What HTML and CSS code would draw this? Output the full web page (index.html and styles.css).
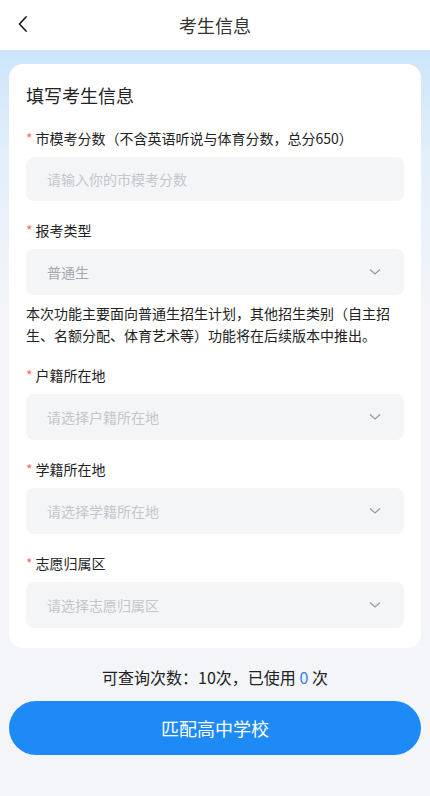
FILE: index.html
```html
<!DOCTYPE html>
<html lang="zh">
<head>
<meta charset="utf-8">
<meta name="viewport" content="width=device-width, initial-scale=1">
<link rel="stylesheet" href="styles.css">
</head>
<body>
<div class="page">
  <header class="nav">
    <span class="back">
      <svg width="12" height="18" viewBox="0 0 12 18"><path d="M9 2 L2.5 9 L9 16" fill="none" stroke="#222" stroke-width="1.8" stroke-linecap="round" stroke-linejoin="round"/></svg>
    </span>
    <h1 class="nav-title">考生信息</h1>
  </header>
  <main class="content">
    <section class="card">
      <h2 class="card-title">填写考生信息</h2>
      <div class="field">
        <div class="label"><span class="req">*</span>市模考分数（不含英语听说与体育分数，总分650）</div>
        <div class="control input"><span class="ph">请输入你的市模考分数</span></div>
      </div>
      <div class="field">
        <div class="label"><span class="req">*</span>报考类型</div>
        <div class="control select"><span class="val">普通生</span><svg class="arrow" width="12" height="8" viewBox="0 0 12 8"><path d="M1 1.5 L6 6 L11 1.5" fill="none" stroke="#999" stroke-width="1.2"/></svg></div>
      </div>
      <p class="note">本次功能主要面向普通生招生计划，其他招生类别（自主招生、名额分配、体育艺术等）功能将在后续版本中推出。</p>
      <div class="field">
        <div class="label"><span class="req">*</span>户籍所在地</div>
        <div class="control select"><span class="ph">请选择户籍所在地</span><svg class="arrow" width="12" height="8" viewBox="0 0 12 8"><path d="M1 1.5 L6 6 L11 1.5" fill="none" stroke="#999" stroke-width="1.2"/></svg></div>
      </div>
      <div class="field">
        <div class="label"><span class="req">*</span>学籍所在地</div>
        <div class="control select"><span class="ph">请选择学籍所在地</span><svg class="arrow" width="12" height="8" viewBox="0 0 12 8"><path d="M1 1.5 L6 6 L11 1.5" fill="none" stroke="#999" stroke-width="1.2"/></svg></div>
      </div>
      <div class="field last">
        <div class="label"><span class="req">*</span>志愿归属区</div>
        <div class="control select"><span class="ph">请选择志愿归属区</span><svg class="arrow" width="12" height="8" viewBox="0 0 12 8"><path d="M1 1.5 L6 6 L11 1.5" fill="none" stroke="#999" stroke-width="1.2"/></svg></div>
      </div>
    </section>
    <p class="quota">可查询次数：10次，已使用 <span class="used">0</span> 次</p>
    <button class="submit">匹配高中学校</button>
  </main>
</div>
</body>
</html>
```
FILE: styles.css
```css
* { box-sizing: border-box; }
html, body {
  margin: 0;
  padding: 0;
  height: 100%;
}
body {
  font-family: "Noto Sans CJK SC", "Noto Sans", sans-serif;
  color: #222;
  background: #f3f5f9;
}
.page {
  min-height: 796px;
  display: flex;
  flex-direction: column;
}
.nav {
  height: 50px;
  background: #fff;
  display: flex;
  align-items: center;
  justify-content: center;
  position: relative;
}
.back {
  position: absolute;
  left: 17px;
  top: 15px;
  display: flex;
}
.nav-title {
  margin: 0;
  font-size: 18px;
  font-weight: 400;
  color: #333;
}
.content {
  flex: 1;
  background: linear-gradient(180deg, #cce5fb 0px, #e4eff9 110px, #f3f5f9 260px, #f3f5f9 100%);
  padding: 14px 9px 0;
  display: flex;
  flex-direction: column;
}
.card {
  background: #fff;
  border-radius: 14px;
  padding: 18px 17px 20px;
}
.card-title {
  margin: 0 0 20px;
  font-size: 18px;
  font-weight: 400;
  line-height: 26px;
  color: #222;
}
.field { margin-bottom: 19px; }
.field.last { margin-bottom: 0; }
.label {
  font-size: 14px;
  line-height: 20px;
  color: #222;
  margin-bottom: 9px;
}
.req {
  color: #f56c6c;
  margin-right: 3px;
}
.control {
  height: 46px;
  background: #f4f5f7;
  border-radius: 8px;
  display: flex;
  align-items: center;
  justify-content: space-between;
  padding: 0 23px 0 21px;
  font-size: 14px;
}
.control.input { height: 44px; }
.ph { color: #c3c6cc; }
.val { color: #a4a7ad; }
.arrow { display: block; }
.note {
  margin: -12px 0 19px;
  font-size: 14px;
  line-height: 22px;
  color: #222;
}
.quota {
  margin: 18px 0 13px;
  text-align: center;
  font-size: 16px;
  line-height: 22px;
  color: #222;
}
.used { color: #3d7ef0; }
.submit {
  height: 54px;
  border: none;
  border-radius: 27px;
  background: #1e8af6;
  color: #fff;
  font-family: "Noto Sans CJK SC", sans-serif;
  font-size: 18px;
  width: 100%;
}
```
